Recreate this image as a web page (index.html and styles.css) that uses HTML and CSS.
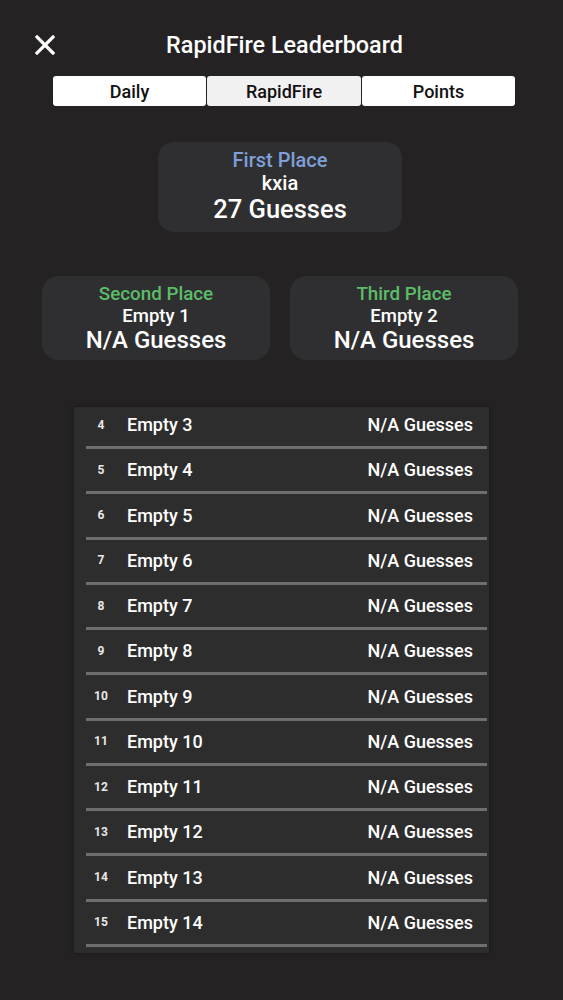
FILE: index.html
```html
<!DOCTYPE html>
<html>
<head>
<meta charset="utf-8">
<link rel="stylesheet" href="styles.css">
</head>
<body>
<div class="screen">
  <header class="header">
    <div class="close">
      <svg width="20" height="20" viewBox="0 0 20 20"><path d="M2 2 L18 18 M18 2 L2 18" stroke="#fff" stroke-width="3.2" stroke-linecap="square"/></svg>
    </div>
    <h1 class="title">RapidFire Leaderboard</h1>
    <div></div>
  </header>
  <nav class="tabs">
    <button class="tab">Daily</button>
    <button class="tab active">RapidFire</button>
    <button class="tab">Points</button>
  </nav>
  <section class="first card">
    <div class="place blue">First Place</div>
    <div class="name">kxia</div>
    <div class="score">27 Guesses</div>
  </section>
  <section class="podium">
    <div class="card small">
      <div class="place green">Second Place</div>
      <div class="name">Empty 1</div>
      <div class="score">N/A Guesses</div>
    </div>
    <div class="card small">
      <div class="place green">Third Place</div>
      <div class="name">Empty 2</div>
      <div class="score">N/A Guesses</div>
    </div>
  </section>
  <section class="list">
    <div class="row"><span class="rank">4</span><span class="rname">Empty 3</span><span class="rscore">N/A Guesses</span></div>
    <div class="row"><span class="rank">5</span><span class="rname">Empty 4</span><span class="rscore">N/A Guesses</span></div>
    <div class="row"><span class="rank">6</span><span class="rname">Empty 5</span><span class="rscore">N/A Guesses</span></div>
    <div class="row"><span class="rank">7</span><span class="rname">Empty 6</span><span class="rscore">N/A Guesses</span></div>
    <div class="row"><span class="rank">8</span><span class="rname">Empty 7</span><span class="rscore">N/A Guesses</span></div>
    <div class="row"><span class="rank">9</span><span class="rname">Empty 8</span><span class="rscore">N/A Guesses</span></div>
    <div class="row"><span class="rank">10</span><span class="rname">Empty 9</span><span class="rscore">N/A Guesses</span></div>
    <div class="row"><span class="rank">11</span><span class="rname">Empty 10</span><span class="rscore">N/A Guesses</span></div>
    <div class="row"><span class="rank">12</span><span class="rname">Empty 11</span><span class="rscore">N/A Guesses</span></div>
    <div class="row"><span class="rank">13</span><span class="rname">Empty 12</span><span class="rscore">N/A Guesses</span></div>
    <div class="row"><span class="rank">14</span><span class="rname">Empty 13</span><span class="rscore">N/A Guesses</span></div>
    <div class="row"><span class="rank">15</span><span class="rname">Empty 14</span><span class="rscore">N/A Guesses</span></div>
  </section>
</div>
</body>
</html>
```

FILE: styles.css
```css
html, body {
  margin: 0;
  padding: 0;
  background: #242222;
}
body {
  font-family: Roboto, "Liberation Sans", sans-serif;
  color: #fff;
  width: 563px;
  height: 1000px;
  overflow: hidden;
}
.screen {
  display: flex;
  flex-direction: column;
  align-items: center;
  padding-top: 25px;
}
.header {
  width: 563px;
  height: 40px;
  display: grid;
  grid-template-columns: 1fr auto 1fr;
  align-items: center;
}
.close {
  padding-left: 35px;
  display: flex;
  align-items: center;
  height: 20px;
}
.close svg { display: block; }
.title {
  margin: 0 0 0 6px;
  font-size: 23.4px;
  font-weight: 500;
  line-height: 40px;
}
.tabs {
  margin-top: 11px;
  margin-left: 5px;
  display: flex;
  gap: 1px;
}
.tab {
  width: 153px;
  height: 30px;
  border: none;
  border-radius: 3px;
  background: #ffffff;
  font-family: Roboto, "Liberation Sans", sans-serif;
  font-size: 18px;
  font-weight: 500;
  color: #111;
  padding: 0;
}
.tab.active {
  background: #f1f1f1;
  width: 154px;
}
.card {
  background: #2f2f31;
  border-radius: 16px;
  text-align: center;
  box-sizing: border-box;
  font-weight: 500;
}
.first {
  margin-top: 36px;
  width: 244px;
  height: 90px;
  padding-top: 7px;
  margin-left: -3px;
}
.first .place { font-size: 20px; line-height: 23px; }
.first .name { font-size: 20px; line-height: 23px; }
.first .score { font-size: 25.5px; line-height: 29px; }
.blue { color: #7f9fd8; }
.green { color: #5cbd68; }
.podium {
  margin-top: 44px;
  display: flex;
  gap: 20px;
  margin-left: -3px;
}
.small {
  width: 228px;
  height: 84px;
  padding-top: 7px;
}
.small .place { font-size: 18.8px; line-height: 22px; }
.small .name { font-size: 18.5px; line-height: 22px; }
.small .score { font-size: 24px; line-height: 27px; }
.list {
  margin-top: 47px;
  width: 415px;
  height: 546px;
  box-sizing: border-box;
  background: #2e2d2e;
  padding: 0 2px 0 12px;
  display: flex;
  flex-direction: column;
  box-shadow: 0 0 4px rgba(0,0,0,0.35);
}
.row {
  border-bottom: 3px solid #6e6e6e;
  margin-bottom: 3.27px;
  display: flex;
  align-items: center;
  padding-bottom: 4px;
  height: 35px;
}
.rank {
  width: 30px;
  text-align: center;
  font-size: 12px;
  font-weight: 700;
  color: #e8e8e8;
}
.rname {
  margin-left: 11px;
  flex: 1;
  font-size: 18px;
  font-weight: 500;
}
.rscore {
  font-size: 18px;
  font-weight: 500;
  padding-right: 14px;
}
```
